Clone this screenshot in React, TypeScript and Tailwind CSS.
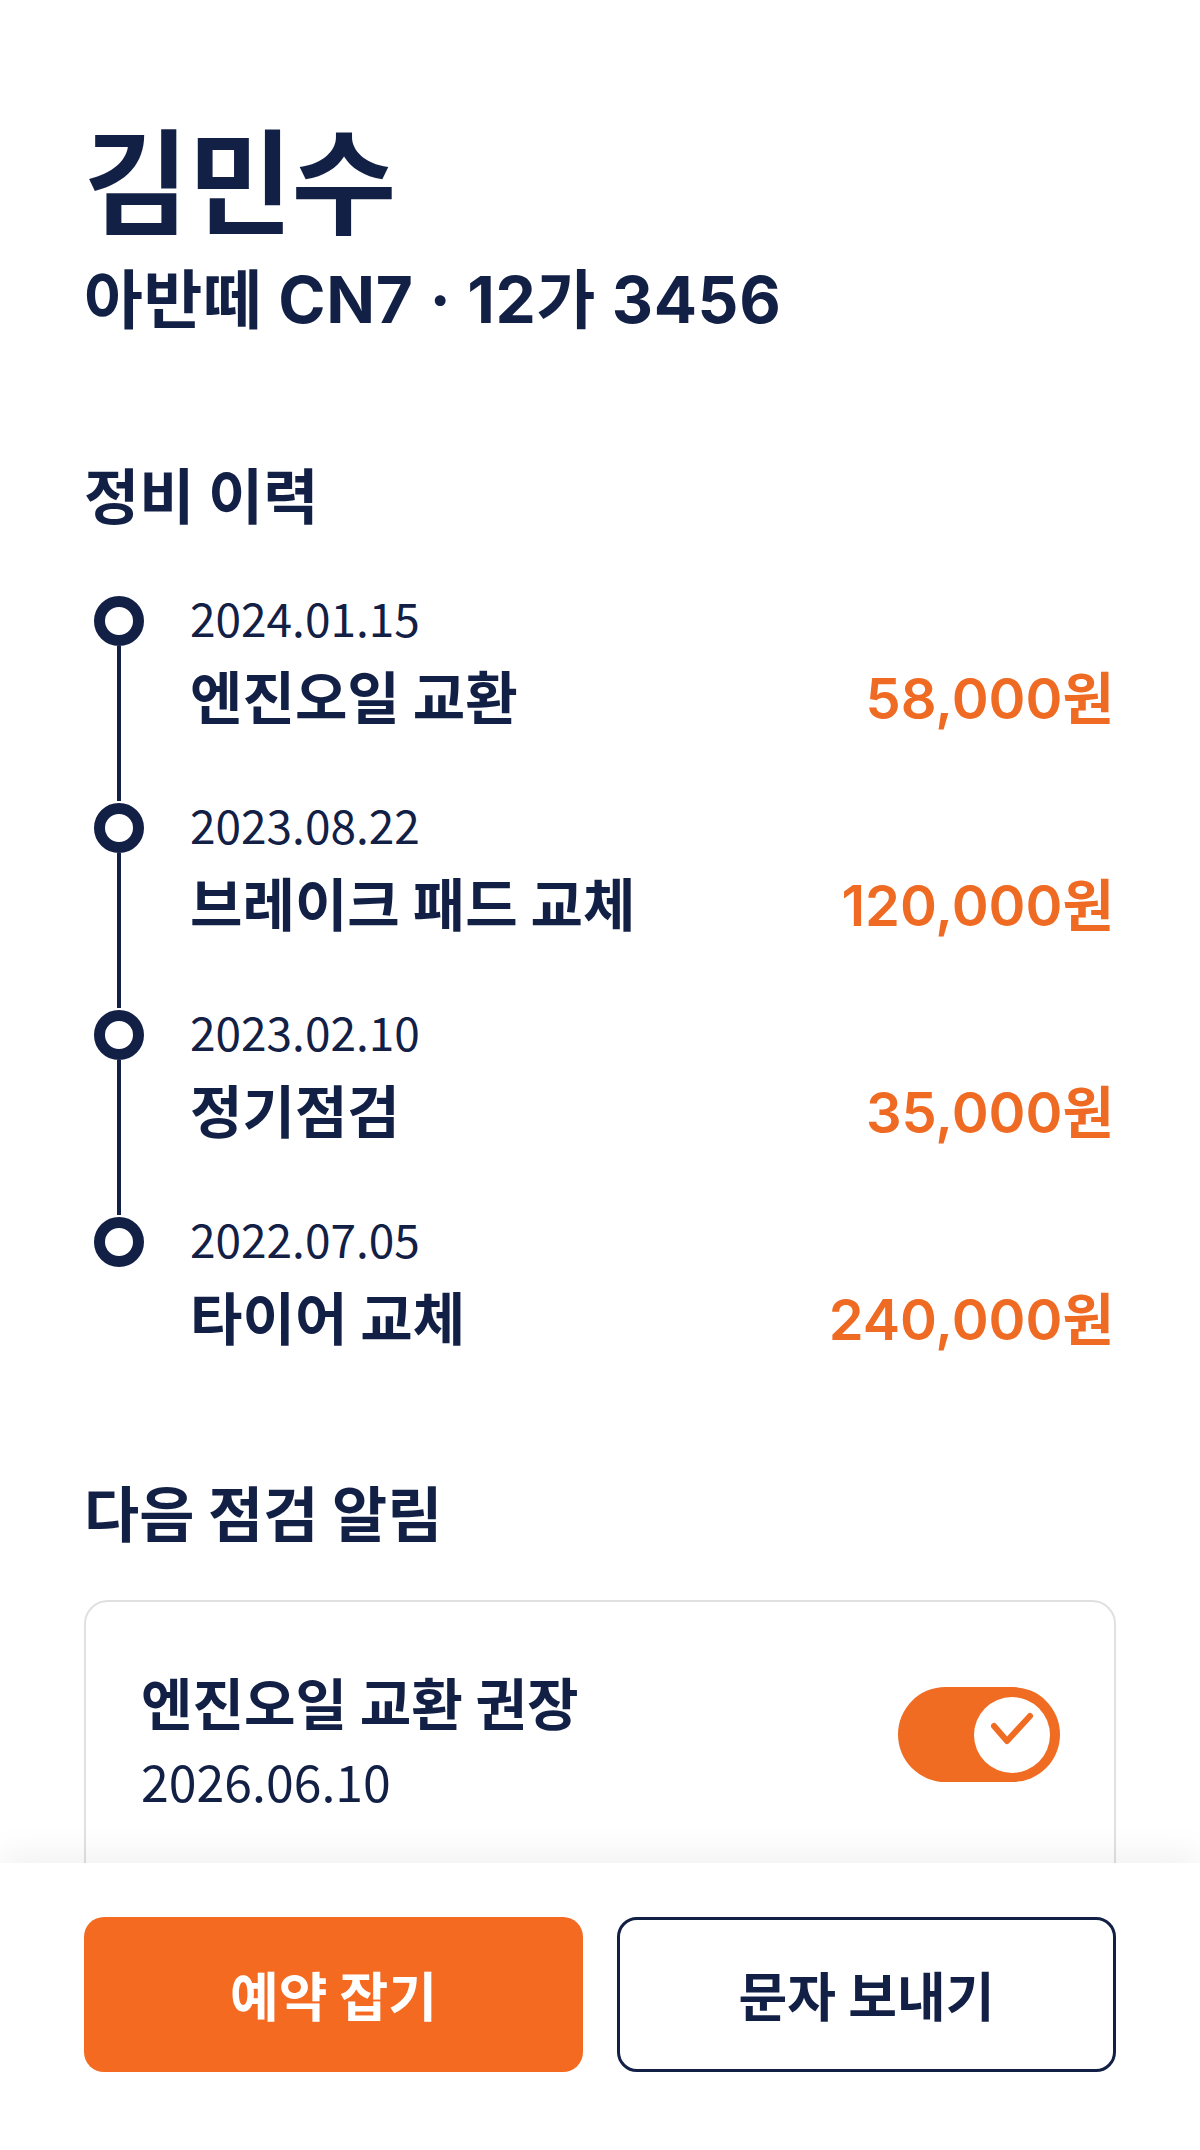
const history = [
  { date: '2024.01.15', title: '엔진오일 교환', price: '58,000원' },
  { date: '2023.08.22', title: '브레이크 패드 교체', price: '120,000원' },
  { date: '2023.02.10', title: '정기점검', price: '35,000원' },
  { date: '2022.07.05', title: '타이어 교체', price: '240,000원' },
]

const font = { fontFamily: '"Noto Sans CJK KR", "Noto Sans", sans-serif' }
const interFont = { fontFamily: 'Inter, "Noto Sans CJK KR", sans-serif' }

function TimelineRow({ item, last }: { item: (typeof history)[number]; last: boolean }) {
  return (
    <div className="flex h-[207px]">
      <div className="ml-[10px] flex w-[50px] flex-col items-center">
        <div className="mt-[2px] h-[50px] w-[50px] shrink-0 rounded-full border-[11px] border-[#132046] bg-white" />
        {!last && <div className="w-[4px] flex-1 bg-[#132046]" />}
      </div>
      <div className="ml-[46px] flex flex-1 flex-col">
        <div className="text-[46px] leading-none text-[#132046]">{item.date}</div>
        <div className="mt-[26px] flex items-baseline justify-between">
          <div className="text-[57px] font-bold leading-none text-[#132046]">{item.title}</div>
          <div className="pr-[2px] text-[56px] font-semibold leading-none text-[#ef6a22]" style={interFont}>
            {item.price}
          </div>
        </div>
      </div>
    </div>
  )
}

export default function App() {
  return (
    <div className="relative min-h-[2150px] overflow-hidden bg-white" style={font}>
      <main className="px-[84px] pt-[119px]">
        <h1 className="text-[114px] font-bold leading-none tracking-[-0.01em] text-[#132046]">김민수</h1>
        <p className="mt-[35px] text-[64px] font-bold leading-none tracking-[0.01em] text-[#132046]" style={interFont}>
          아반떼 CN7 · 12가 3456
        </p>

        <h2 className="mt-[131px] text-[60px] font-bold leading-none text-[#132046]">정비 이력</h2>
        <div className="mt-[71px]">
          {history.map((item, i) => (
            <TimelineRow key={item.date} item={item} last={i === history.length - 1} />
          ))}
        </div>

        <h2 className="mt-[59px] text-[60px] font-bold leading-none text-[#132046]">다음 점검 알림</h2>

        <div className="mt-[59px] flex h-[330px] items-start justify-between rounded-[24px] border-2 border-[#e0e0e0] bg-white pl-[55px] pr-[54px] pt-[71px]">
          <div>
            <div className="text-[56px] font-bold leading-none text-[#132046]">엔진오일 교환 권장</div>
            <div className="mt-[26px] text-[50px] leading-none text-[#132046]">2026.06.10</div>
          </div>
          <button className="mt-[14px] flex h-[95px] w-[162px] items-center justify-end rounded-full bg-[#ef6c22] pr-[10px]">
            <span className="flex h-[76px] w-[76px] items-center justify-center rounded-full bg-white">
              <svg width="76" height="76" viewBox="0 0 76 76" fill="none">
                <path d="M20 29 L33 44 L56 19" stroke="#ef6c22" strokeWidth="6" strokeLinecap="round" strokeLinejoin="round" />
              </svg>
            </span>
          </button>
        </div>
      </main>

      <footer className="absolute bottom-0 left-0 right-0 h-[287px] bg-white px-[84px] pt-[54px] shadow-[0_-12px_30px_rgba(0,0,0,0.05)]">
        <div className="grid grid-cols-2 gap-[34px]">
          <button className="flex h-[155px] items-center justify-center rounded-[20px] bg-[#f46a21] text-[53px] font-bold text-white">
            예약 잡기
          </button>
          <button className="flex h-[155px] items-center justify-center rounded-[20px] border-[3px] border-[#132046] bg-white text-[53px] font-bold text-[#132046]">
            문자 보내기
          </button>
        </div>
      </footer>
    </div>
  )
}
